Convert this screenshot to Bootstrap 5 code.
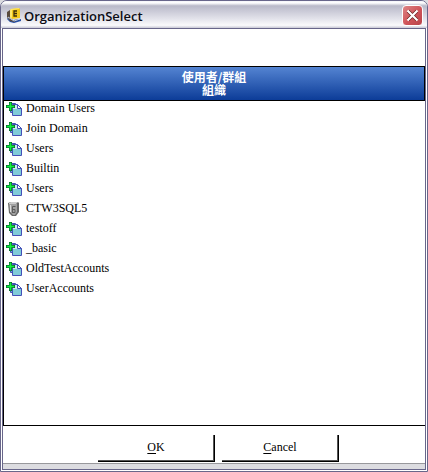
<!DOCTYPE html>
<html lang="zh-Hant">
<head>
<meta charset="utf-8">
<meta name="viewport" content="width=device-width, initial-scale=1">
<title>OrganizationSelect</title>
<link href="https://cdn.jsdelivr.net/npm/bootstrap@5.3.0/dist/css/bootstrap.min.css" rel="stylesheet">
<style>
body{font:12px/20px "Liberation Serif","Noto Sans CJK TC",serif;color:#000;background:#dcdce0}
.win{border:1px solid #68668a;border-radius:7px 7px 0 0;background:#fff}
.titlebar{height:27px;padding:2px 0 0 5px;border-radius:6px 6px 0 0;background:linear-gradient(#f4f4f8 0,#fff 7%,#b9b9c8 18%,#c8c8d5 35%,#e2e2ea 65%,#fafafc 90%,#c8c8d5 100%)}
.titlebar h1{font:600 13px/24px "Open Sans",sans-serif;color:#0c0c14}
.titlebar svg{margin-right:2px}
.close-btn{width:21px;height:21px;border:1px solid #fff;border-radius:4px;background:linear-gradient(135deg,#dd8585,#cf5358 55%,#b8444b)}
.close-btn svg{margin:0}
.inner{margin:0 1px 1px;border:1px solid #68668a}
.spacer{height:37px}
.tree{border:1px solid #000;border-right:0}
.tree-head{height:34px;padding-top:3px;border:solid #000;border-width:0 1px 1px 0;background:linear-gradient(#5484d2,#0c3c98);color:#fff;font:700 12px/13px "Noto Sans CJK TC",sans-serif}
.tree ul{margin-top:-3px;min-height:327px}
.entry{height:20px;padding-left:2px}
.entry a{color:#000;line-height:14px}
.actions{padding:9px 84px 1px 95px;gap:7px}
.act{flex:0 1 117px;height:27px;padding:0 0 2px;border:solid #000;border-width:0 1px 1px 0;box-shadow:inset -1px -1px #555;background:#fff;line-height:22px;color:#000}
.act u{text-underline-offset:2px}
.strip{height:6px;border-top:1px solid #98989c;background:#dcdce0}
</style>
<script src="https://cdn.jsdelivr.net/npm/bootstrap@5.3.0/dist/js/bootstrap.bundle.min.js"></script>
</head>
<body>
<svg class="d-none" aria-hidden="true">
<symbol id="group" viewBox="0 0 16 16">
<path d="M4.500 3.500h5v9h-5z" fill="#68b8dc" stroke="#4450b0"/>
<path d="M6.500 4.500h5l4 4v7h-9z" fill="#c8f0f4" stroke="#4450b8"/>
<path d="M7 9h8v6H7z" fill="#80ccd8"/>
<path d="M11.500 4.500v4h4z" fill="#fff" stroke="#4450b8"/>
<path d="M3 2h3v3h3v3H6v3H3V8H0V5h3z" fill="#08702e"/>
<path d="M4 3h1v3h3v1H5v3H4V7H1V6h3z" fill="#10f840" stroke="#10e840" stroke-width=".6"/>
</symbol>
<symbol id="server" viewBox="0 0 16 16">
<path d="M2 3l3-1h7l1 1v9l-3 4H6l-3-3z" fill="#666"/>
<path d="M3 4h8v8l-2 3H7l-3-3z" fill="#a0a0a0"/>
<path d="M3 3l2-1h7l-2 2H3z" fill="#ccc"/>
<path d="M6.500 13V6.500h3M7 9.500h2v3H7" fill="none" stroke="#5c5c5c"/>
<path d="M4.500 5v7" stroke="#ddd"/>
</symbol>
</svg>
<main class="win">
<header class="titlebar d-flex align-items-center">
<svg class="flex-shrink-0" width="16" height="16" viewBox="0 0 16 16" aria-hidden="true">
<path d="M1 10l3 2 4 1 7-2v2l-7 2-4-1-3-3z" fill="#244da4"/>
<path d="M1 4l3-2v8l3 2 7-1-6 3-4-1-3-4z" fill="#5a4a3c"/>
<path d="M2 9l3 2 3 2 6-2" fill="none" stroke="#b8cdf0"/>
<path d="M5 1l8-1 1 1v9l-8 1-2-2V2z" fill="#f4c91c"/>
<path d="M5 1l8-1v1L6 2v8L4 9V2z" fill="#ffe867"/>
<path d="M11 3H8v5h3M8 5.500h3" fill="none" stroke="#3a2c08" stroke-width="1.300"/>
</svg>
<h1 class="m-0 flex-grow-1">OrganizationSelect</h1>
<button class="close-btn p-0 me-1 d-flex align-items-center justify-content-center" type="button" aria-label="Close">
<svg width="13" height="13" viewBox="0 0 13 13"><path d="M2 2l9 9M11 2l-9 9" stroke="#622" stroke-width="3.400"/><path d="M1.500 1.500l10 10M11.500 1.500l-10 10" stroke="#fff" stroke-width="2.200"/></svg>
</button>
</header>
<div class="inner">
<div class="spacer"></div>
<section class="tree">
<div class="tree-head text-center">使用者/群組<br>組織</div>
<ul class="list-unstyled mb-0" id="entries"></ul>
</section>
<div class="actions d-flex">
<button type="button" class="act"><u>O</u>K</button>
<button type="button" class="act"><u>C</u>ancel</button>
</div>
<div class="strip"></div>
</div>
</main>
<script>
const names=["Domain Users","Join Domain","Users","Builtin","Users","CTW3SQL5","testoff","_basic","OldTestAccounts","UserAccounts"];
document.getElementById("entries").innerHTML=names.map(n=>`<li class="entry d-flex align-items-center gap-1"><svg width="16" height="16" aria-hidden="true"><use href="#${n==="CTW3SQL5"?"server":"group"}"/></svg><a href="#" class="text-decoration-none">${n}</a></li>`).join("");
</script>
</body>
</html>
